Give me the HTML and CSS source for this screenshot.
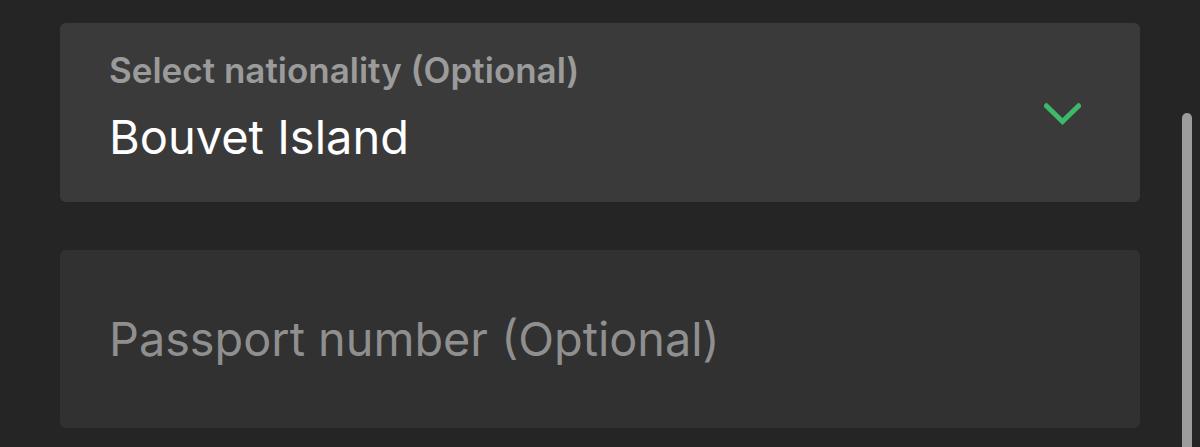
FILE: index.html
```html
<!DOCTYPE html>
<html lang="en">
<head>
<meta charset="utf-8">
<title>Nationality form</title>
<link rel="stylesheet" href="styles.css">
</head>
<body>
<main class="form">
  <div class="field field-select">
    <div class="field-text">
      <div class="field-label">Select nationality (Optional)</div>
      <div class="field-value">Bouvet Island</div>
    </div>
    <svg class="chevron" width="37" height="22" viewBox="0 0 37 22" aria-hidden="true">
      <path d="M2.5 3 L18.5 18.5 L34.5 3" fill="none" stroke="#3dba69" stroke-width="5" stroke-linecap="square" stroke-linejoin="miter"/>
    </svg>
  </div>
  <div class="field field-input">
    <div class="field-placeholder">Passport number (Optional)</div>
  </div>
</main>
<div class="scrollbar"></div>
</body>
</html>
```

FILE: styles.css
```css
html, body {
  margin: 0;
  padding: 0;
  background: #252525;
  height: 447px;
  overflow: hidden;
}

body {
  font-family: Inter, "Noto Sans", sans-serif;
  position: relative;
}

.form {
  display: flex;
  flex-direction: column;
  gap: 48px;
  width: 1080px;
  padding: 23px 0 0 60px;
}

.field {
  display: flex;
  align-items: center;
  border-radius: 6px;
  box-sizing: border-box;
  padding: 0 59px 0 49px;
}

.field-select {
  height: 179px;
  background: #3a3a3a;
  align-items: flex-start;
  padding-top: 27px;
}

.field-text {
  flex: 1;
  display: flex;
  flex-direction: column;
  gap: 19px;
}

.field-label {
  font-size: 35px;
  line-height: 40px;
  font-weight: 600;
  color: #9b9b9b;
}

.field-value {
  font-size: 47px;
  line-height: 56px;
  color: #ffffff;
}

.chevron {
  margin-top: 53px;
}

.field-input {
  height: 178px;
  background: #313131;
}

.field-placeholder {
  font-size: 46.8px;
  line-height: 56px;
  color: #8f8f8f;
}

.scrollbar {
  position: absolute;
  left: 1182px;
  top: 113px;
  width: 10px;
  height: 334px;
  border-radius: 5px 5px 0 0;
  background: #9c9c9c;
}
```
